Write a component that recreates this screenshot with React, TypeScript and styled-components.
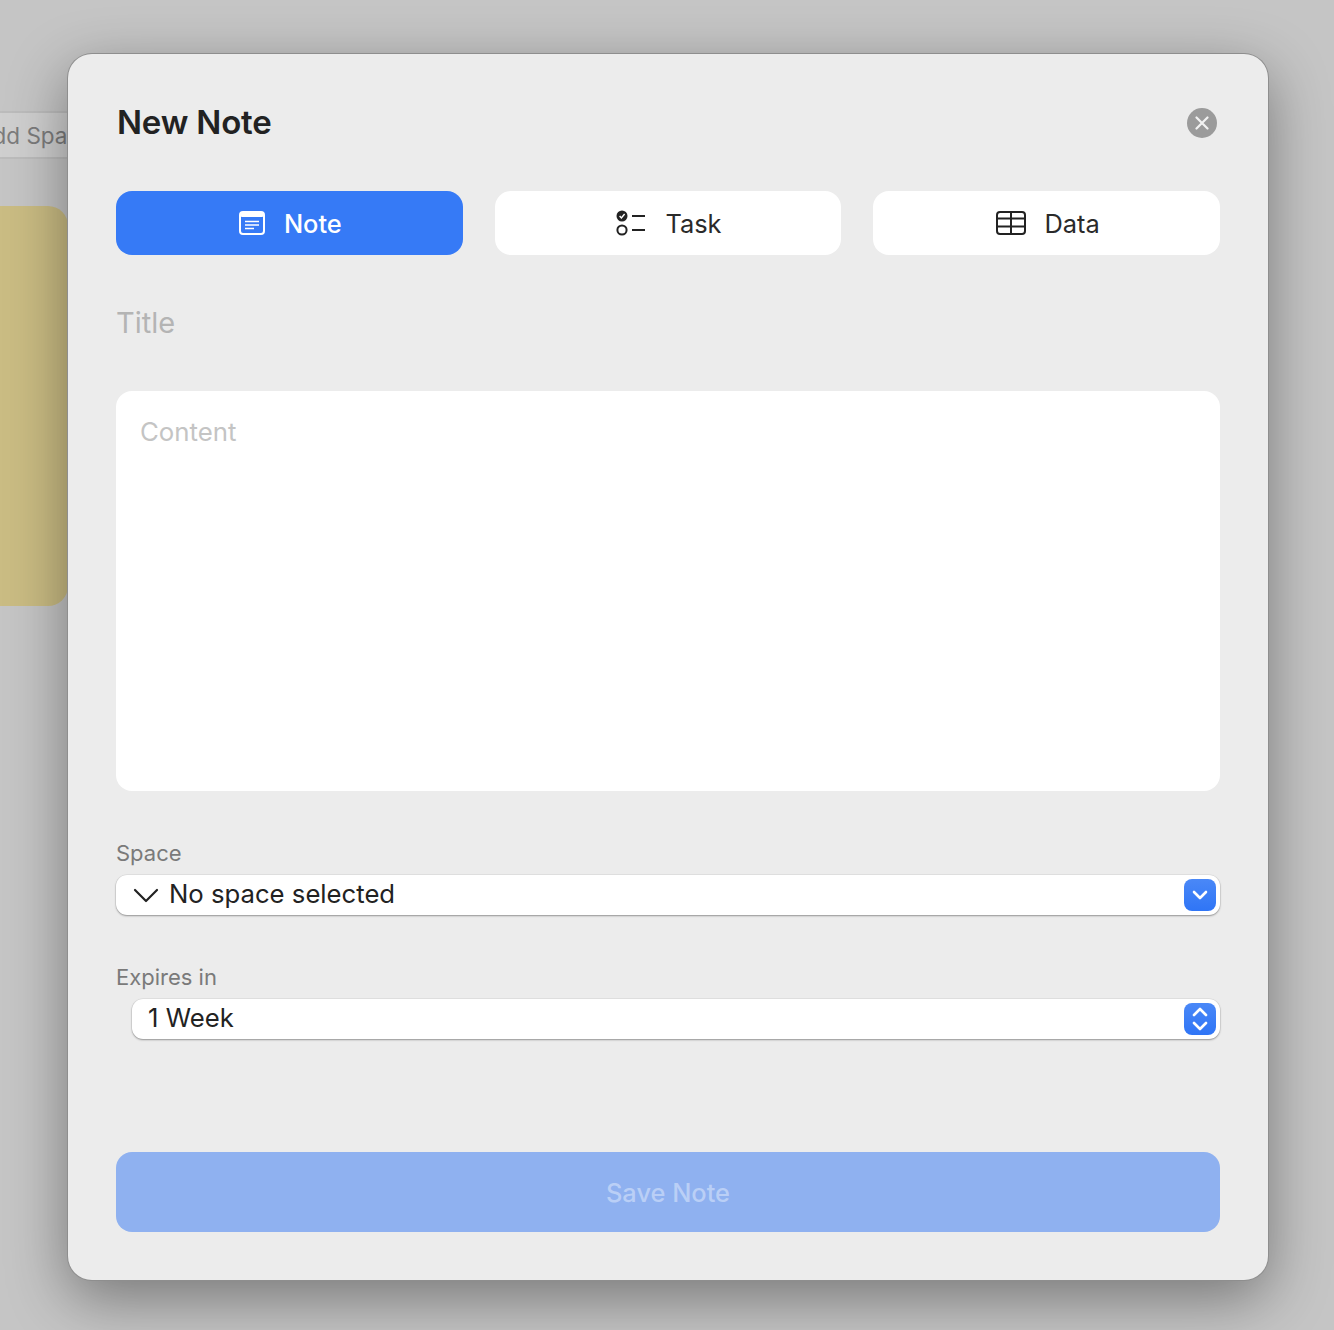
import styled, { createGlobalStyle } from "styled-components"

const GlobalStyle = createGlobalStyle`
  html, body {
    margin: 0;
    padding: 0;
    background: #c5c5c5;
  }
  * {
    box-sizing: border-box;
  }
`

const Page = styled.div`
  position: relative;
  width: 1334px;
  height: 1330px;
  overflow: hidden;
  background: #c5c5c5;
  font-family: Inter, "Liberation Sans", sans-serif;
  padding: 54px 66px 50px 68px;
`
const AddSpaceChip = styled.div`
  position: absolute;
  left: -40px;
  top: 111px;
  width: 120px;
  height: 48px;
  display: flex;
  align-items: center;
  padding-left: 15px;
  background: #cfcfcf;
  border: 2px solid #bcbcbc;
  border-radius: 6px;
  color: #7c7c7c;
  font-size: 22.5px;
  white-space: nowrap;
`
const BackCard = styled.div`
  position: absolute;
  left: -40px;
  top: 206px;
  width: 108px;
  height: 400px;
  border-radius: 20px;
  background: #cabc83;
`
const Modal = styled.div`
  position: relative;
  width: 1200px;
  height: 1226px;
  background: #ececec;
  border-radius: 24px;
  box-shadow: 0 0 0 1px #8e8e8e, 0 18px 60px rgba(0, 0, 0, 0.4);
  padding: 48px;
  display: flex;
  flex-direction: column;
`
const Header = styled.div`
  display: flex;
  align-items: center;
  justify-content: space-between;
  height: 40px;
  margin-bottom: 49px;
`
const Heading = styled.h1`
  margin: 0 0 0 1px;
  font-size: 33px;
  line-height: 40px;
  font-weight: 600;
  letter-spacing: -0.2px;
  color: #222;
`
const CloseButton = styled.button`
  width: 30px;
  height: 30px;
  padding: 0;
  margin: 2px 3px 0 0;
  border: none;
  border-radius: 50%;
  background: #9b9b9b;
  display: flex;
  align-items: center;
  justify-content: center;
`
const Tabs = styled.div`
  display: grid;
  grid-template-columns: repeat(3, 1fr);
  gap: 32px;
  margin-bottom: 46px;
`
const Tab = styled.button<{ $active?: boolean }>`
  height: 64px;
  padding: 0 0 0 2px;
  border: none;
  border-radius: 16px;
  background: ${({ $active }) => ($active ? "#367af6" : "#fff")};
  color: ${({ $active }) => ($active ? "#fff" : "#2a2a2a")};
  display: flex;
  align-items: center;
  justify-content: center;
  gap: 19px;
  font-family: inherit;
  font-size: 25.4px;
  font-weight: ${({ $active }) => ($active ? 500 : 400)};
`
const TitleField = styled.div`
  height: 44px;
  line-height: 44px;
  font-size: 29px;
  color: #b4b4b4;
  margin-bottom: 46px;
`
const ContentBox = styled.div`
  height: 400px;
  border-radius: 16px;
  background: #fff;
  padding: 24px;
  font-size: 25.8px;
  line-height: 34px;
  color: #c4c4c4;
  margin-bottom: 47px;
`
const Field = styled.div`
  display: flex;
  flex-direction: column;
  margin-bottom: 47px;
`
const Label = styled.div`
  height: 30px;
  line-height: 30px;
  font-size: 22px;
  color: #7a7a7a;
  margin-bottom: 7px;
`
const Select = styled.div<{ $indent?: boolean }>`
  height: 40px;
  margin-left: ${({ $indent }) => ($indent ? "16px" : "0")};
  padding: 0 4px 0 ${({ $indent }) => ($indent ? "16px" : "17px")};
  background: #fff;
  border-radius: 11px;
  box-shadow: 0 1px 2px rgba(0, 0, 0, 0.35), 0 0 0 0.5px rgba(0, 0, 0, 0.08);
  display: flex;
  align-items: center;
  font-size: 25.7px;
  color: #222;
`
const SelectValue = styled.span`
  flex: 1;
  line-height: 38px;
  margin-bottom: 2px;
`
const StepperButton = styled.span`
  width: 32px;
  height: 32px;
  border-radius: 8px;
  background: linear-gradient(#4a88f7, #2f75f6);
  display: flex;
  align-items: center;
  justify-content: center;
`
const SaveButton = styled.button`
  height: 80px;
  margin-top: auto;
  border: none;
  border-radius: 16px;
  background: #8fb1f0;
  color: #bacff6;
  font-family: inherit;
  font-size: 25.4px;
  font-weight: 500;
`
const LeadChevron = styled.svg`
  width: 26px;
  height: 16px;
  margin-right: 10px;
`

function NoteIcon() {
  return <svg width="26" height="24" viewBox="0 0 26 24" fill="none">
    <rect x="1" y="1" width="24" height="22" rx="3" fill="#367af6" stroke="#fff" strokeWidth="2"/>
    <rect x="1" y="1" width="24" height="5" rx="2" fill="#fff"/>
    <path d="M6 10.5H20M6 14H20M6 17.5H15" stroke="#fff" strokeWidth="1.5"/>
  </svg>
}
function TaskIcon() {
  return <svg width="30" height="26" viewBox="0 0 30 26" fill="none">
    <circle cx="6" cy="6" r="5.5" fill="#222"/>
    <path d="M3.6 6L5.4 8L8.6 4" stroke="#fff" strokeWidth="1.4"/>
    <circle cx="6" cy="20" r="4.6" stroke="#222" strokeWidth="2"/>
    <path d="M16 6H29M16 20H29" stroke="#222" strokeWidth="2"/>
  </svg>
}
function DataIcon() {
  return <svg width="30" height="24" viewBox="0 0 30 24" fill="none">
    <rect x="1" y="1" width="28" height="22" rx="3" stroke="#222" strokeWidth="2"/>
    <path d="M1 7.5H29M1 15.5H29M15 1V23" stroke="#222" strokeWidth="2"/>
  </svg>
}

function App() {
  return <Page>
    <GlobalStyle/>
    <AddSpaceChip>Add Space</AddSpaceChip>
    <BackCard/>
    <Modal>
      <Header>
        <Heading>New Note</Heading>
        <CloseButton>
          <svg width="14" height="14" viewBox="0 0 14 14" fill="none">
            <path d="M1.5 1.5L12.5 12.5M12.5 1.5L1.5 12.5" stroke="#f2f2f2" strokeWidth="2.2" strokeLinecap="round"/>
          </svg>
        </CloseButton>
      </Header>
      <Tabs>
        <Tab $active><NoteIcon/>Note</Tab>
        <Tab><TaskIcon/>Task</Tab>
        <Tab><DataIcon/>Data</Tab>
      </Tabs>
      <TitleField>Title</TitleField>
      <ContentBox>Content</ContentBox>
      <Field>
        <Label>Space</Label>
        <Select>
          <LeadChevron viewBox="0 0 26 16" fill="none">
            <path d="M2 3L13 14L24 3" stroke="#222" strokeWidth="2.2" strokeLinecap="round" strokeLinejoin="round"/>
          </LeadChevron>
          <SelectValue>No space selected</SelectValue>
          <StepperButton>
            <svg width="16" height="10" viewBox="0 0 16 10" fill="none">
              <path d="M2 2L8 8L14 2" stroke="#fff" strokeWidth="2.6" strokeLinecap="round" strokeLinejoin="round"/>
            </svg>
          </StepperButton>
        </Select>
      </Field>
      <Field>
        <Label>Expires in</Label>
        <Select $indent>
          <SelectValue>1 Week</SelectValue>
          <StepperButton>
            <svg width="16" height="26" viewBox="0 0 16 26" fill="none">
              <path d="M2 9L8 3L14 9M2 17L8 23L14 17" stroke="#fff" strokeWidth="2.6" strokeLinecap="round" strokeLinejoin="round"/>
            </svg>
          </StepperButton>
        </Select>
      </Field>
      <SaveButton>Save Note</SaveButton>
    </Modal>
  </Page>
}

export default App
